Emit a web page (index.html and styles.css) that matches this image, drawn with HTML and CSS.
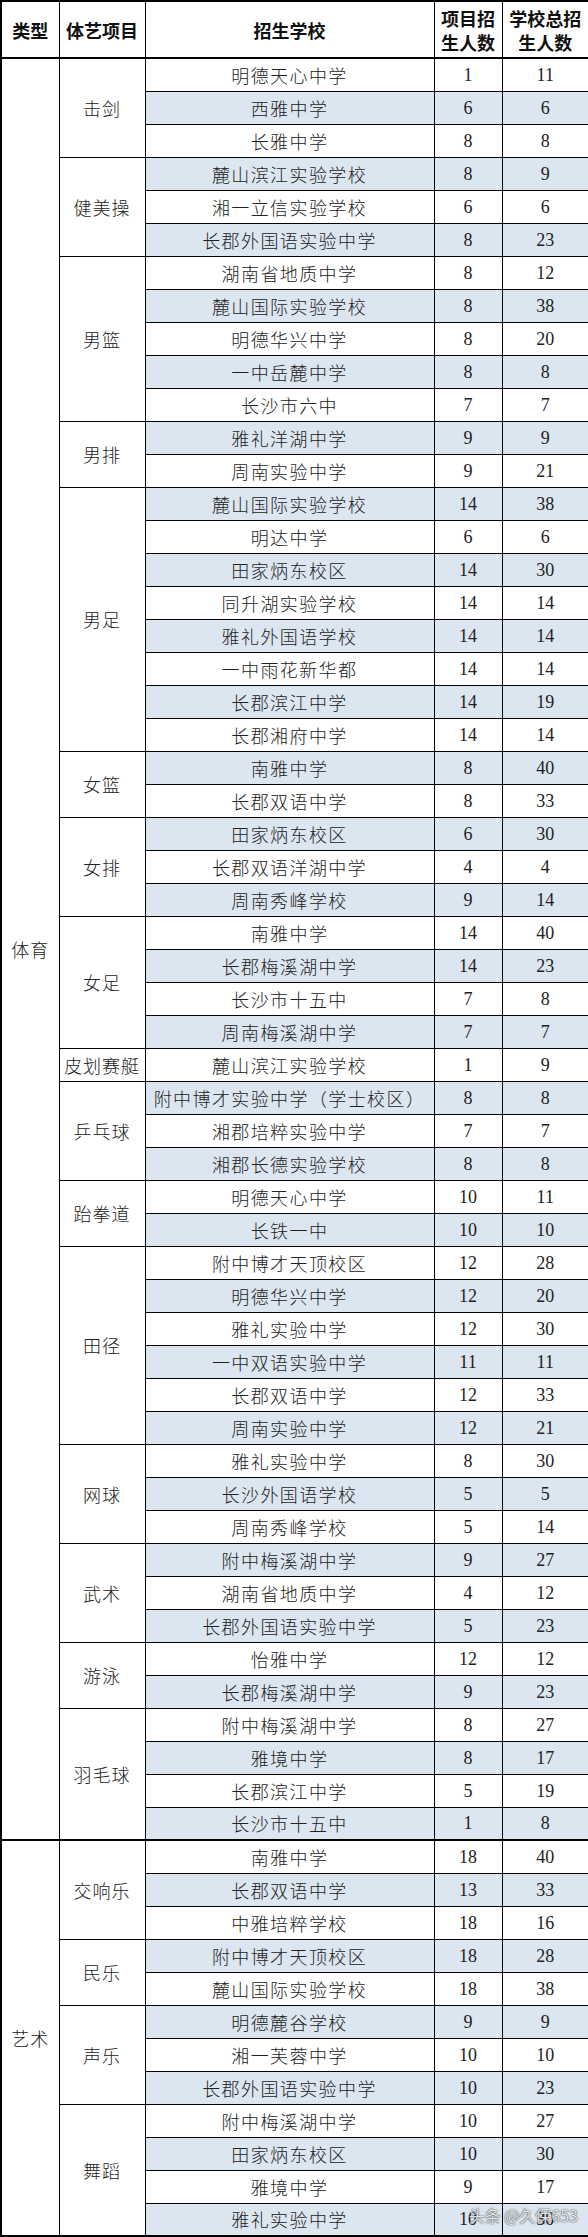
FILE: index.html
```html
<!DOCTYPE html>
<html lang="zh-CN">
<head>
    <meta charset="UTF-8">
    <meta name="viewport" content="width=device-width, initial-scale=1.0">
    <title>体艺特长生招生计划</title>
    <link rel="stylesheet" href="styles.css">
</head>
<body>

<div class="sheet">
<table class="plan">
    <colgroup>
        <col class="c-type">
        <col class="c-item">
        <col class="c-school">
        <col class="c-num">
        <col class="c-total">
    </colgroup>
    <thead>
        <tr>
            <th>类型</th>
            <th>体艺项目</th>
            <th>招生学校</th>
            <th>项目招<br>生人数</th>
            <th>学校总招<br>生人数</th>
        </tr>
    </thead>
    <tbody>
        <!-- 体育 -->
        <tr><td class="grp" rowspan="54">体育</td><td class="grp" rowspan="3">击剑</td><td class="s">明德天心中学</td><td class="n">1</td><td class="n">11</td></tr>
        <tr><td class="s">西雅中学</td><td class="n">6</td><td class="n">6</td></tr>
        <tr><td class="s">长雅中学</td><td class="n">8</td><td class="n">8</td></tr>

        <tr><td class="grp" rowspan="3">健美操</td><td class="s">麓山滨江实验学校</td><td class="n">8</td><td class="n">9</td></tr>
        <tr><td class="s">湘一立信实验学校</td><td class="n">6</td><td class="n">6</td></tr>
        <tr><td class="s">长郡外国语实验中学</td><td class="n">8</td><td class="n">23</td></tr>

        <tr><td class="grp" rowspan="5">男篮</td><td class="s">湖南省地质中学</td><td class="n">8</td><td class="n">12</td></tr>
        <tr><td class="s">麓山国际实验学校</td><td class="n">8</td><td class="n">38</td></tr>
        <tr><td class="s">明德华兴中学</td><td class="n">8</td><td class="n">20</td></tr>
        <tr><td class="s">一中岳麓中学</td><td class="n">8</td><td class="n">8</td></tr>
        <tr><td class="s">长沙市六中</td><td class="n">7</td><td class="n">7</td></tr>

        <tr><td class="grp" rowspan="2">男排</td><td class="s">雅礼洋湖中学</td><td class="n">9</td><td class="n">9</td></tr>
        <tr><td class="s">周南实验中学</td><td class="n">9</td><td class="n">21</td></tr>

        <tr><td class="grp" rowspan="8">男足</td><td class="s">麓山国际实验学校</td><td class="n">14</td><td class="n">38</td></tr>
        <tr><td class="s">明达中学</td><td class="n">6</td><td class="n">6</td></tr>
        <tr><td class="s">田家炳东校区</td><td class="n">14</td><td class="n">30</td></tr>
        <tr><td class="s">同升湖实验学校</td><td class="n">14</td><td class="n">14</td></tr>
        <tr><td class="s">雅礼外国语学校</td><td class="n">14</td><td class="n">14</td></tr>
        <tr><td class="s">一中雨花新华都</td><td class="n">14</td><td class="n">14</td></tr>
        <tr><td class="s">长郡滨江中学</td><td class="n">14</td><td class="n">19</td></tr>
        <tr><td class="s">长郡湘府中学</td><td class="n">14</td><td class="n">14</td></tr>

        <tr><td class="grp" rowspan="2">女篮</td><td class="s">南雅中学</td><td class="n">8</td><td class="n">40</td></tr>
        <tr><td class="s">长郡双语中学</td><td class="n">8</td><td class="n">33</td></tr>

        <tr><td class="grp" rowspan="3">女排</td><td class="s">田家炳东校区</td><td class="n">6</td><td class="n">30</td></tr>
        <tr><td class="s">长郡双语洋湖中学</td><td class="n">4</td><td class="n">4</td></tr>
        <tr><td class="s">周南秀峰学校</td><td class="n">9</td><td class="n">14</td></tr>

        <tr><td class="grp" rowspan="4">女足</td><td class="s">南雅中学</td><td class="n">14</td><td class="n">40</td></tr>
        <tr><td class="s">长郡梅溪湖中学</td><td class="n">14</td><td class="n">23</td></tr>
        <tr><td class="s">长沙市十五中</td><td class="n">7</td><td class="n">8</td></tr>
        <tr><td class="s">周南梅溪湖中学</td><td class="n">7</td><td class="n">7</td></tr>

        <tr><td class="grp">皮划赛艇</td><td class="s">麓山滨江实验学校</td><td class="n">1</td><td class="n">9</td></tr>

        <tr><td class="grp" rowspan="3">乒乓球</td><td class="s">附中博才实验中学（学士校区）</td><td class="n">8</td><td class="n">8</td></tr>
        <tr><td class="s">湘郡培粹实验中学</td><td class="n">7</td><td class="n">7</td></tr>
        <tr><td class="s">湘郡长德实验学校</td><td class="n">8</td><td class="n">8</td></tr>

        <tr><td class="grp" rowspan="2">跆拳道</td><td class="s">明德天心中学</td><td class="n">10</td><td class="n">11</td></tr>
        <tr><td class="s">长铁一中</td><td class="n">10</td><td class="n">10</td></tr>

        <tr><td class="grp" rowspan="6">田径</td><td class="s">附中博才天顶校区</td><td class="n">12</td><td class="n">28</td></tr>
        <tr><td class="s">明德华兴中学</td><td class="n">12</td><td class="n">20</td></tr>
        <tr><td class="s">雅礼实验中学</td><td class="n">12</td><td class="n">30</td></tr>
        <tr><td class="s">一中双语实验中学</td><td class="n">11</td><td class="n">11</td></tr>
        <tr><td class="s">长郡双语中学</td><td class="n">12</td><td class="n">33</td></tr>
        <tr><td class="s">周南实验中学</td><td class="n">12</td><td class="n">21</td></tr>

        <tr><td class="grp" rowspan="3">网球</td><td class="s">雅礼实验中学</td><td class="n">8</td><td class="n">30</td></tr>
        <tr><td class="s">长沙外国语学校</td><td class="n">5</td><td class="n">5</td></tr>
        <tr><td class="s">周南秀峰学校</td><td class="n">5</td><td class="n">14</td></tr>

        <tr><td class="grp" rowspan="3">武术</td><td class="s">附中梅溪湖中学</td><td class="n">9</td><td class="n">27</td></tr>
        <tr><td class="s">湖南省地质中学</td><td class="n">4</td><td class="n">12</td></tr>
        <tr><td class="s">长郡外国语实验中学</td><td class="n">5</td><td class="n">23</td></tr>

        <tr><td class="grp" rowspan="2">游泳</td><td class="s">怡雅中学</td><td class="n">12</td><td class="n">12</td></tr>
        <tr><td class="s">长郡梅溪湖中学</td><td class="n">9</td><td class="n">23</td></tr>

        <tr><td class="grp" rowspan="4">羽毛球</td><td class="s">附中梅溪湖中学</td><td class="n">8</td><td class="n">27</td></tr>
        <tr><td class="s">雅境中学</td><td class="n">8</td><td class="n">17</td></tr>
        <tr><td class="s">长郡滨江中学</td><td class="n">5</td><td class="n">19</td></tr>
        <tr><td class="s">长沙市十五中</td><td class="n">1</td><td class="n">8</td></tr>

        <!-- 艺术 -->
        <tr class="sect"><td class="grp" rowspan="12">艺术</td><td class="grp" rowspan="3">交响乐</td><td class="s">南雅中学</td><td class="n">18</td><td class="n">40</td></tr>
        <tr><td class="s">长郡双语中学</td><td class="n">13</td><td class="n">33</td></tr>
        <tr><td class="s">中雅培粹学校</td><td class="n">18</td><td class="n">16</td></tr>

        <tr><td class="grp" rowspan="2">民乐</td><td class="s">附中博才天顶校区</td><td class="n">18</td><td class="n">28</td></tr>
        <tr><td class="s">麓山国际实验学校</td><td class="n">18</td><td class="n">38</td></tr>

        <tr><td class="grp" rowspan="3">声乐</td><td class="s">明德麓谷学校</td><td class="n">9</td><td class="n">9</td></tr>
        <tr><td class="s">湘一芙蓉中学</td><td class="n">10</td><td class="n">10</td></tr>
        <tr><td class="s">长郡外国语实验中学</td><td class="n">10</td><td class="n">23</td></tr>

        <tr><td class="grp" rowspan="4">舞蹈</td><td class="s">附中梅溪湖中学</td><td class="n">10</td><td class="n">27</td></tr>
        <tr><td class="s">田家炳东校区</td><td class="n">10</td><td class="n">30</td></tr>
        <tr><td class="s">雅境中学</td><td class="n">9</td><td class="n">17</td></tr>
        <tr><td class="s">雅礼实验中学</td><td class="n">10</td><td class="n">30</td></tr>
    </tbody>
</table>
<div class="mark">头条 @久保653</div>
</div>

</body>
</html>
```

FILE: styles.css
```css
body {
    margin: 0;
    background-color: #fff;
    font-family: "Noto Sans CJK SC", sans-serif;
    color: #222;
}
.sheet {
    position: relative;
    width: 588px;
}
.plan {
    width: 588px;
    border-collapse: collapse;
    table-layout: fixed;
    border: 2px solid #000;
}
.c-type { width: 58px; }
.c-item { width: 86px; }
.c-school { width: 289px; }
.c-num { width: 68px; }
.c-total { width: 87px; }

.plan th,
.plan td {
    border: 1px solid #000;
    padding: 0;
    text-align: center;
    vertical-align: middle;
    white-space: nowrap;
    overflow: hidden;
}
.plan th {
    height: 55px;
    font-size: 18px;
    font-weight: 700;
    line-height: 24px;
    color: #111;
    border-bottom: 2px solid #000;
}
.plan tbody tr {
    height: 33px;
}
.grp {
    font-size: 18px;
    font-weight: 300;
    letter-spacing: 1px;
    background-color: #fff;
}
.s {
    font-size: 18px;
    font-weight: 300;
    letter-spacing: 1.4px;
    line-height: 20px;
}
.n {
    font-family: "Liberation Serif", "Noto Sans CJK SC", serif;
    font-size: 18px;
    line-height: 20px;
}
/* 隔行浅蓝 */
.plan tbody tr:nth-child(even) .s,
.plan tbody tr:nth-child(even) .n {
    background-color: #dce6f1;
}
.plan tr.sect td {
    border-top: 2px solid #000;
}

.mark {
    position: absolute;
    right: 10px;
    bottom: 13px;
    font-size: 16px;
    line-height: 18px;
    color: rgba(255, 255, 255, 0.9);
    text-shadow: 0 0 1px rgba(0, 0, 0, 0.8), 0 0 2px rgba(0, 0, 0, 0.5);
}
```
